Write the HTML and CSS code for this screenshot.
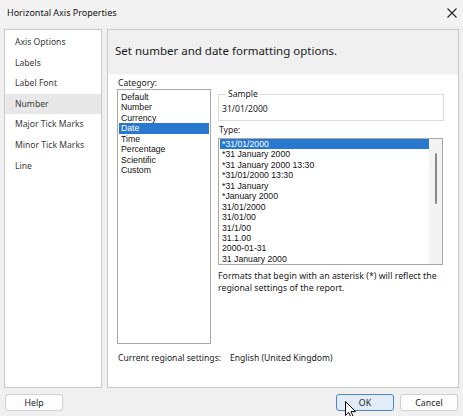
FILE: index.html
```html
<!DOCTYPE html>
<html>
<head>
<meta charset="utf-8">
<link rel="stylesheet" href="styles.css">
</head>
<body>
<div class="dialog">
  <div class="titlebar">
    <span class="title">Horizontal Axis Properties</span>
    <svg class="close" width="10" height="10" viewBox="0 0 10 10"><path d="M0.5 0.5L9.5 9.5M9.5 0.5L0.5 9.5" stroke="#222" stroke-width="1.1"/></svg>
  </div>
  <div class="main">
    <nav class="nav">
      <div class="nav-item">Axis Options</div>
      <div class="nav-item">Labels</div>
      <div class="nav-item">Label Font</div>
      <div class="nav-item active">Number</div>
      <div class="nav-item">Major Tick Marks</div>
      <div class="nav-item">Minor Tick Marks</div>
      <div class="nav-item">Line</div>
    </nav>
    <section class="panel">
      <div class="panel-head">Set number and date formatting options.</div>
      <div class="panel-body">
        <div class="cols">
          <div class="cat-col">
            <div class="label">Category:</div>
            <div class="listbox cat-list">
              <div class="opt">Default</div>
              <div class="opt">Number</div>
              <div class="opt">Currency</div>
              <div class="opt sel">Date</div>
              <div class="opt">Time</div>
              <div class="opt">Percentage</div>
              <div class="opt">Scientific</div>
              <div class="opt">Custom</div>
            </div>
          </div>
          <div class="type-col">
            <fieldset class="sample">
              <legend>Sample</legend>
              <div class="sample-val">31/01/2000</div>
            </fieldset>
            <div class="label type-label">Type:</div>
            <div class="listbox type-list">
              <div class="type-items">
                <div class="opt sel">*31/01/2000</div>
                <div class="opt">*31 January 2000</div>
                <div class="opt">*31 January 2000 13:30</div>
                <div class="opt">*31/01/2000 13:30</div>
                <div class="opt">*31 January</div>
                <div class="opt">*January 2000</div>
                <div class="opt">31/01/2000</div>
                <div class="opt">31/01/00</div>
                <div class="opt">31/1/00</div>
                <div class="opt">31.1.00</div>
                <div class="opt">2000-01-31</div>
                <div class="opt">31 January 2000</div>
              </div>
              <div class="scroll"><div class="thumb"></div></div>
            </div>
            <p class="note">Formats that begin with an asterisk (*) will reflect the regional settings of the report.</p>
          </div>
        </div>
        <div class="regional"><span class="reg-label">Current regional settings:</span><span>English (United Kingdom)</span></div>
      </div>
    </section>
  </div>
  <div class="footer">
    <button class="btn">Help</button>
    <div class="spacer"></div>
    <button class="btn primary">OK</button>
    <button class="btn">Cancel</button>
  </div>
  <svg class="cursor" width="12" height="18" viewBox="0 0 12 18"><path d="M0.5 0.5V14.5L3.8 11.4L6.2 16.8L8.3 15.9L6 10.6H10.5Z" fill="#fff" stroke="#000" stroke-width="1"/></svg>
</div>
</body>
</html>
```
FILE: styles.css
```css
* { box-sizing: border-box; }
html, body { margin: 0; padding: 0; }
body {
  width: 463px;
  height: 416px;
  background: #f0f0f0;
  font-family: "Noto Sans", "Open Sans", sans-serif;
  font-size: 8.6px;
  color: #1a1a1a;
  overflow: hidden;
}
.dialog { position: relative; width: 463px; height: 416px; display: flex; flex-direction: column; }
.titlebar {
  height: 25px;
  display: flex;
  align-items: center;
  justify-content: space-between;
  padding: 0 6px 0 7px;
  background: #f3f3f3;
}
.title { font-size: 9px; color: #111; }
.main {
  height: 363px;
  padding: 4px 4px 0 4px;
  display: flex;
  gap: 5px;
}
.nav {
  width: 100px;
  height: 359px;
  background: #fff;
  border: 1px solid #c8c8c8;
  padding-top: 2px;
}
.nav-item {
  height: 20.6px;
  line-height: 20.6px;
  padding-left: 10px;
  color: #3a3a3a;
  font-size: 8.6px;
}
.nav-item.active { background: #e8e8e8; }
.panel {
  flex: 1;
  height: 359px;
  border: 1px solid #c8c8c8;
  background: #fff;
  display: flex;
  flex-direction: column;
}
.panel-head {
  height: 45px;
  background: #f0f0f0;
  padding: 13px 0 0 7px;
  font-size: 11.5px;
  color: #1a1a1a;
  border-bottom: 1px solid #fafafa;
}
.panel-body { flex: 1; padding: 3px 14px 0 9px; display: flex; flex-direction: column; }
.cols { display: flex; gap: 7px; }
.cat-col { width: 94px; }
.label { font-size: 8.6px; height: 11px; line-height: 11px; margin-left: 1px; }
.listbox { background: #fff; border: 1px solid #a8a8a8; }
.cat-list { height: 255px; margin-top: 0; padding: 2px 1px; }
.opt {
  height: 10.45px;
  line-height: 10.45px;
  padding-left: 2px;
  font-family: "Liberation Sans", Arial, sans-serif;
  font-size: 8.7px;
  color: #111;
  white-space: nowrap;
}
.opt.sel { background: #2878d0; color: #fff; }
.type-col { width: 226px; }
.sample {
  margin: 0;
  margin-top: 11px;
  height: 32px;
  border: 1px solid #dcdcdc;
  padding: 0 0 0 3px;
  min-width: 0;
}
.sample legend { padding: 0 2px; margin-left: 4px; font-size: 8.6px; line-height: 10px; }
.sample-val { font-size: 8.6px; margin-top: 4px; }
.type-label { margin-top: 4px; }
.type-list {
  margin-top: 2px;
  height: 127px;
  display: flex;
  padding: 0 0 0 1px;
  width: 225px;
}
.type-items { flex: 1; }
.scroll { width: 13px; background: #f3f3f3; display: flex; justify-content: center; padding-top: 14px; }
.thumb { width: 2px; height: 51px; background: #8a8a8a; border-radius: 1px; }
.note { margin: 5px 0 0 0; font-size: 8.8px; line-height: 12px; width: 225px; }
.regional { margin-top: 8px; margin-left: 1px; font-size: 8.6px; display: flex; }
.reg-label { width: 112px; }
.footer {
  display: flex;
  align-items: center;
  padding: 6px 5px 0 5px;
  gap: 6px;
}
.spacer { flex: 1; }
.btn {
  font-family: inherit;
  font-size: 8.8px;
  height: 17px;
  width: 58px;
  background: #fdfdfd;
  border: 1px solid #d0d0d0;
  border-radius: 3px;
  color: #1a1a1a;
  padding: 0;
}
.btn.primary { background: #e1ecf8; border: 1px solid #4a86c8; }
.cursor { position: absolute; left: 345px; top: 401px; }
```
